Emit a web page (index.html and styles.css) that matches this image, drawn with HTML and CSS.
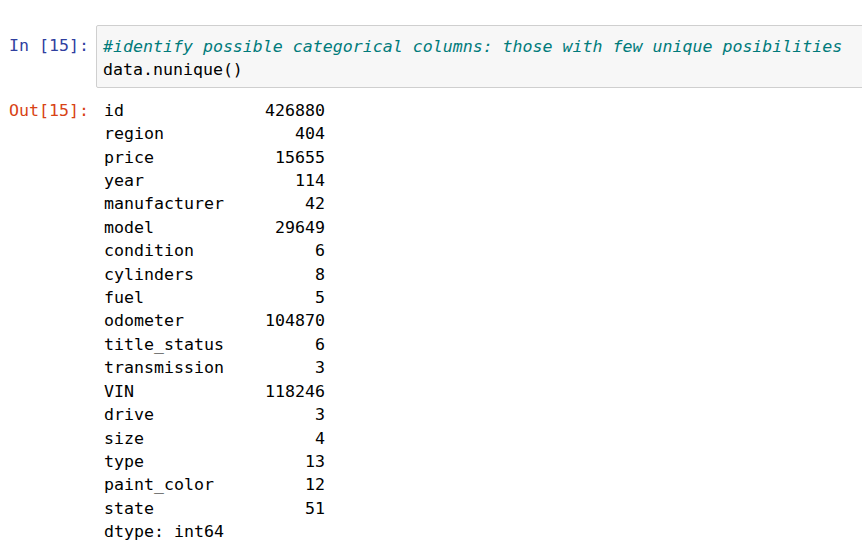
FILE: index.html
```html
<!DOCTYPE html>
<html>
<head>
<meta charset="utf-8">
<link rel="stylesheet" href="styles.css">
</head>
<body>
<div class="cell">
  <div class="row input-row">
    <div class="prompt in-prompt">In&nbsp;[15]:</div>
    <div class="input-area">
      <div class="line"><span class="comment">#identify possible categorical columns: those with few unique posibilities</span></div>
      <div class="line">data.nunique()</div>
    </div>
  </div>
  <div class="row output-row">
    <div class="prompt out-prompt">Out[15]:</div>
    <div class="output-area">
      <div class="series">
        <div class="srow"><span>id</span><span>426880</span></div>
        <div class="srow"><span>region</span><span>404</span></div>
        <div class="srow"><span>price</span><span>15655</span></div>
        <div class="srow"><span>year</span><span>114</span></div>
        <div class="srow"><span>manufacturer</span><span>42</span></div>
        <div class="srow"><span>model</span><span>29649</span></div>
        <div class="srow"><span>condition</span><span>6</span></div>
        <div class="srow"><span>cylinders</span><span>8</span></div>
        <div class="srow"><span>fuel</span><span>5</span></div>
        <div class="srow"><span>odometer</span><span>104870</span></div>
        <div class="srow"><span>title_status</span><span>6</span></div>
        <div class="srow"><span>transmission</span><span>3</span></div>
        <div class="srow"><span>VIN</span><span>118246</span></div>
        <div class="srow"><span>drive</span><span>3</span></div>
        <div class="srow"><span>size</span><span>4</span></div>
        <div class="srow"><span>type</span><span>13</span></div>
        <div class="srow"><span>paint_color</span><span>12</span></div>
        <div class="srow"><span>state</span><span>51</span></div>
        <div class="srow"><span>dtype: int64</span></div>
      </div>
    </div>
  </div>
</div>
</body>
</html>
```

FILE: styles.css
```css
html, body {
  margin: 0;
  padding: 0;
  background: #ffffff;
  overflow: hidden;
}

body {
  width: 862px;
  height: 560px;
  font-family: "DejaVu Sans Mono", "Liberation Mono", monospace;
  font-size: 16.6px;
  line-height: 23.4px;
  color: #000000;
}

.cell {
  padding-top: 25px;
  display: flex;
  flex-direction: column;
  gap: 11px;
}

.row {
  display: flex;
  align-items: flex-start;
}

.prompt {
  width: 89px;
  flex: none;
  text-align: right;
  white-space: nowrap;
}

.in-prompt {
  color: #303f9f;
  padding-top: 9px;
}

.out-prompt {
  color: #d84315;
}

.input-area {
  margin-left: 7px;
  margin-right: -20px;
  flex: 1;
  background: #f7f7f7;
  border: 1px solid #cfcfcf;
  border-radius: 2px;
  padding: 9px 6px 5px;
}

.line {
  white-space: pre;
}

.comment {
  color: #007b7b;
  font-style: italic;
}

.output-area {
  margin-left: 15px;
}

.series {
  width: 221px;
}

.srow {
  display: flex;
  justify-content: space-between;
  white-space: pre;
}
```
